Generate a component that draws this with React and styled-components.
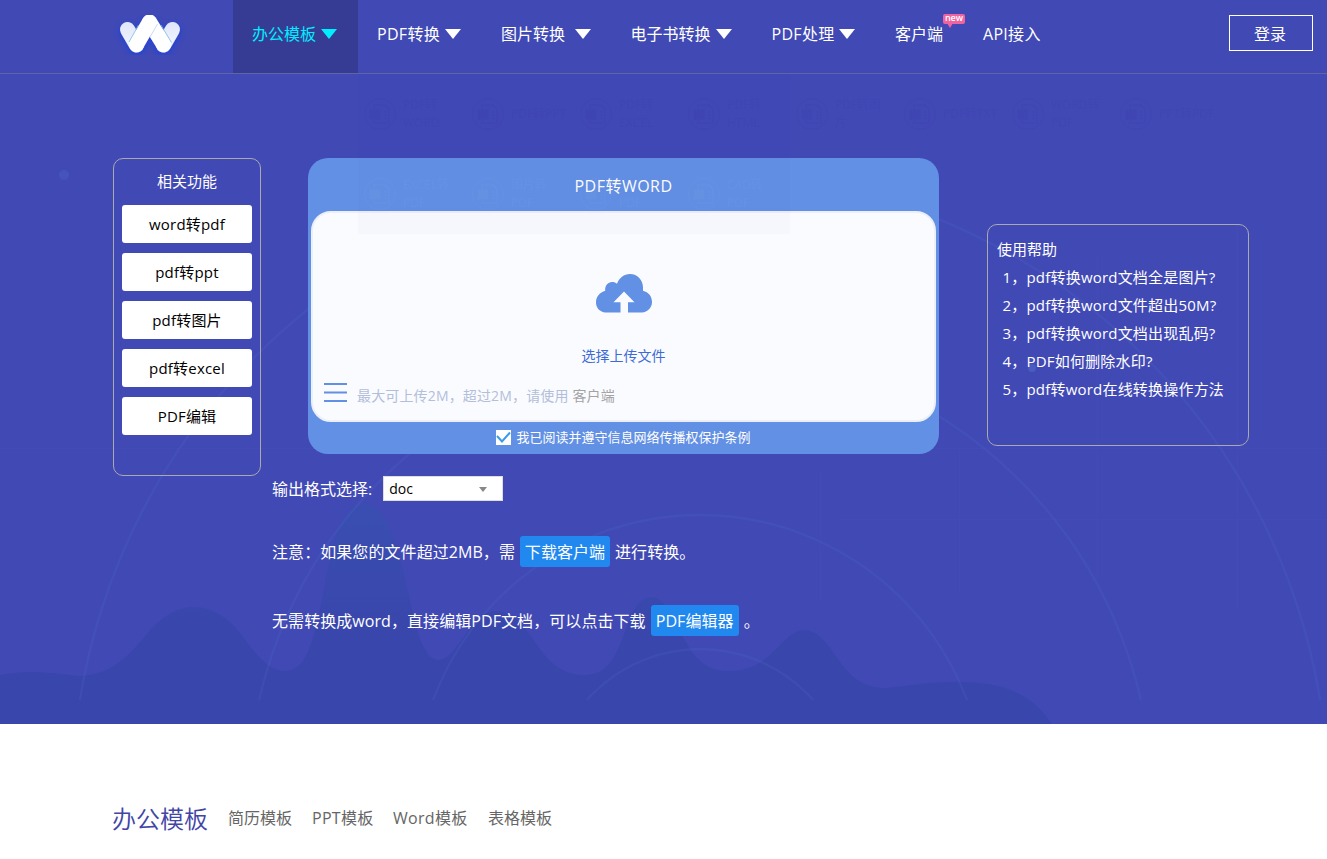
import { useState } from "react";
import styled, { createGlobalStyle } from "styled-components";

const GlobalStyle = createGlobalStyle`
  * {
    box-sizing: border-box;
  }
  body {
    margin: 0;
    background-color: white;
    font-family: "Open Sans", "Noto Sans CJK SC", sans-serif;
    font-size: 16px;
    color: white;
    overflow: hidden;
  }
  a {
    color: inherit;
    text-decoration: none;
  }
`;

const Page = styled.div`
  height: 859px;
  overflow: hidden;
`;

const Hero = styled.div`
  position: relative;
  height: 724px;
  background-color: #4149b5;
`;

const Backdrop = styled.svg`
  position: absolute;
  top: 0;
  left: 0;
`;

const Header = styled.header`
  position: relative;
  display: flex;
  height: 74px;
  border-bottom: 1px solid #6163a9;
`;

const Logo = styled.a`
  width: 233px;
  padding: 4px 0 0 109px;
`;

const Nav = styled.nav`
  display: flex;
  flex: 1;
`;

const NavItem = styled.a`
  display: flex;
  align-items: center;
  width: ${(props) => props.$width}px;
  padding: 0 21px 7px 19px;
  white-space: nowrap;
  letter-spacing: ${(props) => props.$spacing || 0}px;
  color: ${(props) => (props.$active ? "#00efff" : "white")};
  background-color: ${(props) => (props.$active ? "#363b93" : "transparent")};
`;

const Arrow = styled.span`
  margin-left: auto;
  margin-top: 2px;
  border: 8px solid transparent;
  border-top: 10px solid currentColor;
  border-bottom: 0;
`;

const NewWrapper = styled.span`
  position: relative;
`;

const NewBadge = styled.span`
  position: absolute;
  top: -7px;
  left: 48px;
  width: 22px;
  height: 10px;
  border-radius: 2px;
  background-color: #ef63a0;
  font-size: 9px;
  font-weight: 600;
  line-height: 8px;
  letter-spacing: 0;
  text-align: center;

  &::after {
    content: "";
    position: absolute;
    top: 9px;
    left: 4px;
    border: 3px solid transparent;
    border-top: 5px solid #ef63a0;
    border-bottom: 0;
  }
`;

const LoginButton = styled.button`
  width: 84px;
  height: 36px;
  margin: 15px 14px 0 0;
  padding: 0 2px 1px 0;
  border: 1px solid white;
  background-color: transparent;
  color: white;
  font-family: inherit;
  font-size: 16px;
`;

const Main = styled.main`
  position: relative;
  display: grid;
  grid-template-columns: 148px 715px 262px;
  column-gap: 11px;
  padding: 84px 0 0 113px;
  align-items: start;
`;

const RelatedPanel = styled.div`
  display: flex;
  flex-direction: column;
  gap: 10px;
  height: 318px;
  padding: 8px;
  border: 1px solid #a9a9ae;
  border-radius: 10px;
  font-size: 15px;
`;

const RelatedTitle = styled.div`
  height: 28px;
  line-height: 28px;
  text-align: center;
`;

const RelatedLink = styled.a`
  height: 38px;
  border-radius: 3px;
  background-color: white;
  color: #000;
  line-height: 38px;
  text-align: center;
  letter-spacing: 0.2px;
`;

const Center = styled.div`
  width: 715px;
`;

const UploadCard = styled.div`
  width: 631px;
  height: 296px;
  margin-left: 36px;
  padding: 0 3px;
  border-radius: 20px;
  background-color: #6290e4;
`;

const CardTitle = styled.div`
  height: 53px;
  line-height: 56px;
  text-align: center;
  letter-spacing: 0.5px;
`;

const DropArea = styled.div`
  display: flex;
  flex-direction: column;
  align-items: center;
  height: 211px;
  padding-top: 61px;
  border: 2px solid #eceff8;
  border-radius: 20px;
  background-color: #fafbfe;
`;

const UploadText = styled.div`
  height: 20px;
  margin-top: 33px;
  color: #3d6bd6;
  font-size: 14px;
  line-height: 20px;
`;

const LimitRow = styled.div`
  display: flex;
  align-items: center;
  align-self: stretch;
  height: 24px;
  margin-top: 14px;
  padding-left: 11px;
`;

const LimitText = styled.span`
  margin: 5px 0 0 10px;
  color: #b3bedb;
  font-size: 14px;
  letter-spacing: 0.15px;

  a {
    color: #a3a3a5;
  }
`;

const AgreeLabel = styled.div`
  display: flex;
  justify-content: center;
  align-items: center;
  gap: 5px;
  height: 30px;
  font-size: 13px;
  cursor: pointer;
`;

const AgreeText = styled.span`
  margin-top: -2px;
`;

const CheckBox = styled.span`
  display: flex;
  width: 15px;
  height: 15px;
  background-color: white;
`;

const FormatRow = styled.div`
  display: flex;
  align-items: center;
  gap: 11px;
  height: 25px;
  margin-top: 22px;
  white-space: nowrap;
`;

const FormatLabel = styled.span`
  margin-top: -2px;
`;

const FormatSelect = styled.div`
  display: flex;
  align-items: center;
  justify-content: space-between;
  width: 120px;
  height: 25px;
  padding: 0 15px 0 5px;
  border: 1px solid #ddd;
  background-color: white;
  color: #000;
  font-size: 14px;
`;

const SelectArrow = styled.span`
  margin-top: 2px;
  border: 4px solid transparent;
  border-top: 5px solid #888;
  border-bottom: 0;
`;

const Note = styled.div`
  height: 31px;
  margin-top: ${(props) => props.$top}px;
  line-height: 33px;
  white-space: nowrap;
  letter-spacing: 0.07px;
`;

const DownloadLink = styled.a`
  display: inline-block;
  width: ${(props) => props.$width}px;
  height: 31px;
  margin: 0 5px;
  border-radius: 3px;
  background-color: #2188f0;
  text-align: center;
  vertical-align: top;
`;

const HelpPanel = styled.div`
  width: 262px;
  height: 222px;
  margin: 66px 0 0 -11px;
  padding: 10px 9px;
  border: 1px solid #a9a9ae;
  border-radius: 10px;
  font-size: 15px;
  line-height: 28px;
`;

const HelpItem = styled.div`
  padding-left: 5.500px;
  white-space: nowrap;
  letter-spacing: 0.2px;
`;

const FadedMenu = styled.div`
  position: absolute;
  top: 74px;
  left: 358px;
  display: grid;
  grid-template-columns: repeat(8, 108px);
  grid-auto-rows: 80px;
  pointer-events: none;
`;

const FadedShade = styled.div`
  position: absolute;
  top: 0;
  left: 0;
  width: 432px;
  height: 160px;
  background-color: #4149b5;
  opacity: 0.02;
`;

const FadedItem = styled.div`
  position: relative;
  display: flex;
  align-items: center;
  gap: 7px;
  padding-left: 6px;
  color: ${(props) => (props.$onCard ? "#fff" : "#2b0a8c")};
  font-size: 12px;
  line-height: 18px;
  opacity: ${(props) => (props.$onCard ? 0.025 : 0.05)};

  span {
    width: 58px;
    padding-top: ${(props) => (props.$low ? 18 : 0)}px;
  }
`;

const Templates = styled.section`
  display: flex;
  align-items: center;
  height: 60px;
  margin-top: 63px;
  padding-left: 112px;
  color: #666;
`;

const TemplatesTitle = styled.h2`
  margin: 0 20px 0 0;
  color: #4145a6;
  font-size: 24px;
  font-weight: 350;
`;

const TemplateLink = styled.a`
  width: ${(props) => props.$width}px;
  white-space: nowrap;
  letter-spacing: ${(props) => props.$spacing || 0}px;
`;

const navItems = [
  { label: "办公模板", width: 125, active: true, arrow: true },
  { label: "PDF转换", width: 124, arrow: true, spacing: 0.3 },
  { label: "图片转换", width: 129.5, arrow: true },
  { label: "电子书转换", width: 141, arrow: true },
  { label: "PDF处理", width: 123.5, arrow: true, spacing: 0.3 },
  { label: "客户端", width: 88, isNew: true },
  { label: "API接入", width: 100, spacing: 0.3 },
];

const related = ["word转pdf", "pdf转ppt", "pdf转图片", "pdf转excel", "PDF编辑"];

const helpItems = [
  "1，pdf转换word文档全是图片?",
  "2，pdf转换word文件超出50M?",
  "3，pdf转换word文档出现乱码?",
  "4，PDF如何删除水印?",
  "5，pdf转word在线转换操作方法",
];

const menuItems = [
  { label: "PDF转 WORD" },
  { label: "PDF转PPT" },
  { label: "PDF转 EXCEL" },
  { label: "PDF转 HTML" },
  { label: "PDF转图 片" },
  { label: "PDF转TXT" },
  { label: "WORD转 PDF" },
  { label: "PPT转PDF" },
  { label: "EXCEL转 PDF", onCard: true },
  { label: "图片转 PDF", onCard: true },
  { label: "PDF", onCard: true, low: true },
  { label: "CAD转 PDF", onCard: true },
];

const templates = [
  { label: "简历模板", width: 84 },
  { label: "PPT模板", width: 81, spacing: 0.3 },
  { label: "Word模板", width: 95, spacing: 0.3 },
  { label: "表格模板", width: 64 },
];

const LogoIcon = () => (
  <svg width="82" height="62" viewBox="109 4 82 62">
    <defs>
      <linearGradient id="side" x1="0" y1="22" x2="0" y2="52" gradientUnits="userSpaceOnUse">
        <stop offset="0" stopColor="#e0e6fa" />
        <stop offset="1" stopColor="#f4f9ff" />
      </linearGradient>
      <filter id="glow" x="-30%" y="-30%" width="160%" height="170%">
        <feDropShadow dx="0" dy="2" stdDeviation="3" floodColor="#1642ef" floodOpacity="0.75" />
      </filter>
    </defs>
    <g filter="url(#glow)" fill="none" strokeLinecap="round">
      <path d="M127.500 29.500L136.500 45M172.500 29.500L163.500 45" stroke="url(#side)" strokeWidth="15" />
      <path d="M149.500 22L163.500 44.500" stroke="white" strokeWidth="15" />
      <path d="M149.500 22L136.500 44.500" stroke="white" strokeWidth="15" />
    </g>
    <path d="M138.500 25L129 42M161 25L171.500 42.500" stroke="#7fbfe0" strokeWidth="1" opacity="0.8" />
    <path d="M157.500 24L150 37" stroke="#c9dcf1" strokeWidth="1" />
  </svg>
);

const CloudIcon = () => (
  <svg width="56" height="39" viewBox="0 0 56 39">
    <path
      d="M9.500 38.500C4 38 0 34 0 28.500C0 22.500 4 18.500 9.200 16.800C8.600 11.500 12 8 16 8C18 8 19.800 8.600 21 9.800C23 4 28 0 34 0C41.500 0 47 6 47 13.500V16.800C52.500 18.200 56 22.500 56 28C56 34 51.500 38 46 38.500H32V28.200H38.500L28 17.500L17.500 28.200H24.500V38.500Z"
      fill="#6290e4"
    />
  </svg>
);

const DocIcon = () => (
  <svg width="32" height="32" viewBox="0 0 32 32" fill="none" stroke="currentColor">
    <circle cx="16" cy="16" r="15.500" />
    <path d="M10 11V7H21L25 11V25H10V22M20 14H23M20 17H23M20 20H23" strokeWidth="1.500" />
    <rect x="6" y="12" width="10" height="9" fill="currentColor" />
  </svg>
);

const HeroBackdrop = () => (
  <Backdrop width="1327" height="724">
    <defs>
      <linearGradient id="wave" x1="0" y1="503" x2="0" y2="640" gradientUnits="userSpaceOnUse">
        <stop offset="0" stopColor="#3a4eb1" />
        <stop offset="1" stopColor="#3946ac" />
      </linearGradient>
      <clipPath id="arcs">
        <rect width="1327" height="700" />
      </clipPath>
    </defs>
    <path
      d="M0 675C25 670 45 672 80 676C110 674 125 660 145 636C165 612 180 607 195 607C220 608 235 625 247 642C260 660 272 671 284 671C306 671 312 645 322 600C333 530 345 503 365 503C388 505 399 550 410 600C418 640 427 661 439 660C458 659 470 611 495 611C535 612 535 675 585 675C630 675 620 597 652 597C680 600 680 671 727 671C775 671 780 630 805 630C835 632 838 688 885 688C910 686 930 681 965 682C1010 683 1035 698 1052 724H0Z"
      fill="url(#wave)"
    />
    <g fill="none" stroke="#5c86d8" strokeOpacity="0.12" strokeWidth="2.400" clipPath="url(#arcs)">
      <circle cx="700" cy="800" r="151" />
      <circle cx="700" cy="800" r="285" />
      <circle cx="700" cy="800" r="452" />
      <circle cx="700" cy="800" r="628" />
    </g>
    <path
      d="M0 448.500H1327M840 519.500H1327M820.500 470V600M959.500 450V592M1097.500 250V580M1237.500 225V612"
      stroke="#5055bf"
      strokeOpacity="0.15"
    />
    <circle cx="64" cy="175" r="5" fill="#5064c8" fillOpacity="0.4" />
    <circle cx="1032" cy="368" r="4" fill="#5873cf" fillOpacity="0.45" />
  </Backdrop>
);

const App = () => {
  const [agreed, setAgreed] = useState(true);

  return (
    <Page>
      <GlobalStyle />
      <Hero>
        <HeroBackdrop />
        <Header>
          <Logo href="#">
            <LogoIcon />
          </Logo>
          <Nav>
            {navItems.map((item) => (
              <NavItem
                key={item.label}
                href="#"
                $width={item.width}
                $active={item.active}
                $spacing={item.spacing}
              >
                {item.isNew ? (
                  <NewWrapper>
                    {item.label}
                    <NewBadge>new</NewBadge>
                  </NewWrapper>
                ) : (
                  item.label
                )}
                {item.arrow && <Arrow />}
              </NavItem>
            ))}
          </Nav>
          <LoginButton>登录</LoginButton>
        </Header>
        <Main>
          <RelatedPanel>
            <RelatedTitle>相关功能</RelatedTitle>
            {related.map((label) => (
              <RelatedLink key={label} href="#">{label}</RelatedLink>
            ))}
          </RelatedPanel>
          <Center>
            <UploadCard>
              <CardTitle>PDF转WORD</CardTitle>
              <DropArea>
                <CloudIcon />
                <UploadText>选择上传文件</UploadText>
                <LimitRow>
                  <svg width="23" height="19">
                    <path d="M0 1H23M0 9.500H23M0 18H23" stroke="#6290e4" strokeWidth="2" />
                  </svg>
                  <LimitText>
                    最大可上传2M，超过2M，请使用 <a href="#">客户端</a>
                  </LimitText>
                </LimitRow>
              </DropArea>
              <AgreeLabel onClick={() => setAgreed(!agreed)}>
                <CheckBox>
                  {agreed && (
                    <svg width="15" height="15" fill="none" stroke="#3c9be8" strokeWidth="2">
                      <path d="M1 6L6 11.500L14 2.500" />
                    </svg>
                  )}
                </CheckBox>
                <AgreeText>我已阅读并遵守信息网络传播权保护条例</AgreeText>
              </AgreeLabel>
            </UploadCard>
            <FormatRow>
              <FormatLabel>输出格式选择:</FormatLabel>
              <FormatSelect>
                doc
                <SelectArrow />
              </FormatSelect>
            </FormatRow>
            <Note $top={35}>
              注意：如果您的文件超过2MB，需
              <DownloadLink href="#" $width={90}>下载客户端</DownloadLink>
              进行转换。
            </Note>
            <Note $top={38}>
              无需转换成word，直接编辑PDF文档，可以点击下载
              <DownloadLink href="#" $width={88}>PDF编辑器</DownloadLink>
              。
            </Note>
          </Center>
          <HelpPanel>
            使用帮助
            {helpItems.map((item) => (
              <HelpItem key={item}>{item}</HelpItem>
            ))}
          </HelpPanel>
        </Main>
        <FadedMenu>
          <FadedShade />
          {menuItems.map((item) => (
            <FadedItem key={item.label} $onCard={item.onCard} $low={item.low}>
              <DocIcon />
              <span>{item.label}</span>
            </FadedItem>
          ))}
        </FadedMenu>
      </Hero>
      <Templates>
        <TemplatesTitle>办公模板</TemplatesTitle>
        {templates.map((item) => (
          <TemplateLink key={item.label} href="#" $width={item.width} $spacing={item.spacing}>
            {item.label}
          </TemplateLink>
        ))}
      </Templates>
    </Page>
  );
};

export default App;
